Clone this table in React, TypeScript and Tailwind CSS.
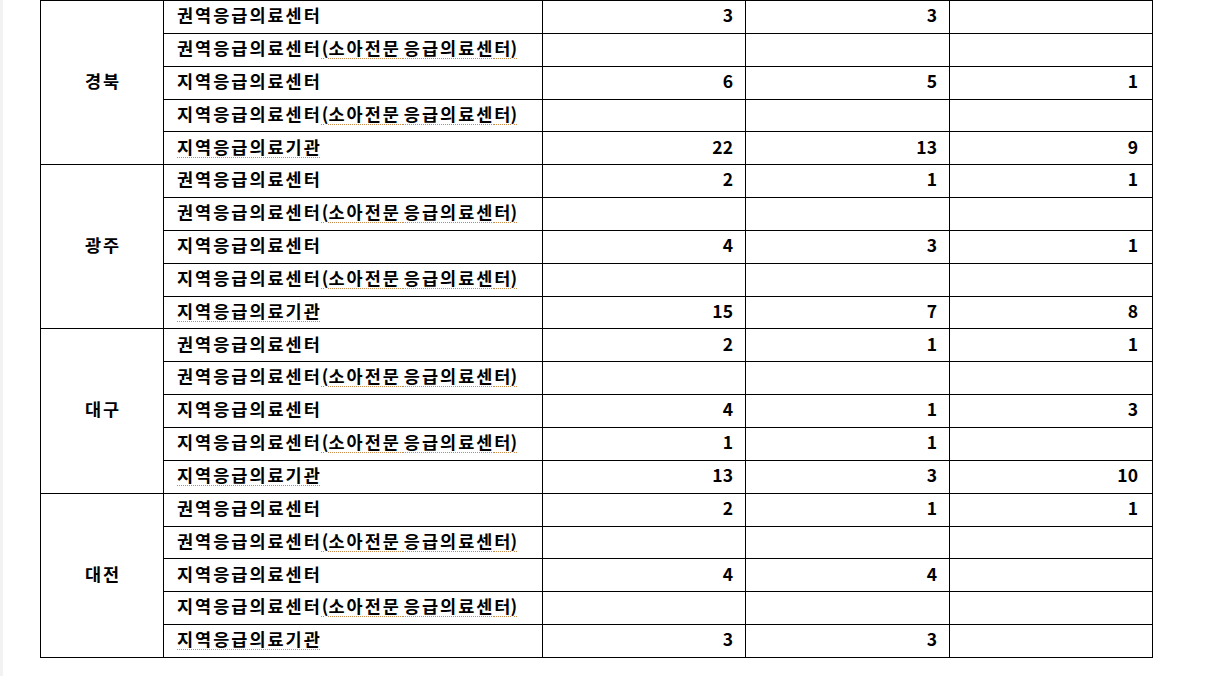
import React from "react";

type Row = { name: string; a?: string; b?: string; c?: string };

const rowsFor = (v: (string | undefined)[][]): Row[] => {
  const names = [
    "권역응급의료센터",
    "권역응급의료센터(소아전문응급의료센터)",
    "지역응급의료센터",
    "지역응급의료센터(소아전문응급의료센터)",
    "지역응급의료기관",
  ];
  return names.map((n, i) => ({ name: n, a: v[i][0], b: v[i][1], c: v[i][2] }));
};

const groups: { region: string; rows: Row[] }[] = [
  {
    region: "경북",
    rows: rowsFor([
      ["3", "3", undefined],
      [undefined, undefined, undefined],
      ["6", "5", "1"],
      [undefined, undefined, undefined],
      ["22", "13", "9"],
    ]),
  },
  {
    region: "광주",
    rows: rowsFor([
      ["2", "1", "1"],
      [undefined, undefined, undefined],
      ["4", "3", "1"],
      [undefined, undefined, undefined],
      ["15", "7", "8"],
    ]),
  },
  {
    region: "대구",
    rows: rowsFor([
      ["2", "1", "1"],
      [undefined, undefined, undefined],
      ["4", "1", "3"],
      ["1", "1", undefined],
      ["13", "3", "10"],
    ]),
  },
  {
    region: "대전",
    rows: rowsFor([
      ["2", "1", "1"],
      [undefined, undefined, undefined],
      ["4", "4", undefined],
      [undefined, undefined, undefined],
      ["3", "3", undefined],
    ]),
  },
];

const ul = "underline decoration-dotted decoration-[#c98a4a] underline-offset-[3px] decoration-1";

function Name({ name }: { name: string }) {
  if (name === "지역응급의료기관") return <span className={ul}>{name}</span>;
  const idx = name.indexOf("(");
  if (idx >= 0) {
    return (
      <>
        {name.slice(0, idx)}
        <span className={ul}>
          <span className="tracking-[0px]">(</span>소아전문<span className="tracking-[-1px]"> </span>응급의료센<span className="tracking-[0px]">터)</span>
        </span>
      </>
    );
  }
  return <>{name}</>;
}

export default function App() {
  return (
    <div
      className="w-[1207px] h-[676px] bg-white overflow-hidden flex"
      style={{ fontFamily: '"Noto Sans CJK KR", "Noto Sans", sans-serif' }}
    >
      <div className="w-[3px] h-full bg-[#f2f2f2]" />
      <div className="pl-[37px]">
        <table className="border-collapse text-black font-bold text-[17.5px] leading-none">
          <colgroup>
            <col className="w-[123px]" />
            <col className="w-[379px]" />
            <col className="w-[203px]" />
            <col className="w-[204px]" />
            <col className="w-[203px]" />
          </colgroup>
          <tbody>
            {groups.map((g) =>
              g.rows.map((r, i) => (
                <tr key={g.region + i} className="h-[32.85px]">
                  {i === 0 && (
                    <td
                      rowSpan={5}
                      className="border border-black text-center align-middle p-0 pb-[4px] tracking-[2px] pl-[2px]"
                    >
                      {g.region}
                    </td>
                  )}
                  <td className="border border-black pl-[13px] p-0 pb-[4px] whitespace-nowrap tracking-[2px]">
                    <Name name={r.name} />
                  </td>
                  <td className="border border-black text-right pr-[12px] p-0 pb-[4px]">{r.a}</td>
                  <td className="border border-black text-right pr-[12px] p-0 pb-[4px]">{r.b}</td>
                  <td className="border border-black text-right pr-[14px] p-0 pb-[4px]">{r.c}</td>
                </tr>
              ))
            )}
          </tbody>
        </table>
      </div>
    </div>
  );
}
